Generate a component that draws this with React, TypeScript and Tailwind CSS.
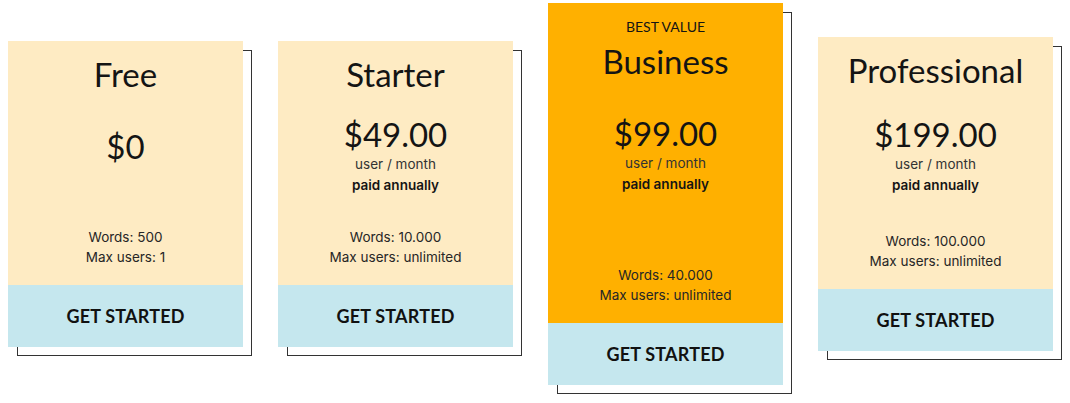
import React from "react";

type Plan = {
  name: string;
  price: string;
  billed: boolean;
  words: string;
  users: string;
  highlight?: boolean;
  height: string;
  priceGap: string;
};

const plans: Plan[] = [
  { name: "Free", price: "$0", billed: false, words: "500", users: "1", height: "h-[244px]", priceGap: "mt-[32px]" },
  { name: "Starter", price: "$49.00", billed: true, words: "10.000", users: "unlimited", height: "h-[244px]", priceGap: "mt-[20px]" },
  { name: "Business", price: "$99.00", billed: true, words: "40.000", users: "unlimited", highlight: true, height: "h-[320px]", priceGap: "mt-[32px]" },
  { name: "Professional", price: "$199.00", billed: true, words: "100.000", users: "unlimited", height: "h-[252px]", priceGap: "mt-[24px]" },
];

const small = { fontFamily: "Inter, 'Noto Sans', sans-serif" };

function PlanCard({ plan }: { plan: Plan }) {
  return (
    <div className="w-[235px] flex flex-col shadow-[9px_9px_0_-1px_#fff,9px_9px_0_0_#333] text-[#141414]">
      {/* top block */}
      <div
        className={`${plan.height} flex flex-col items-center ${plan.highlight ? "bg-[#ffb000] pt-[14px]" : "bg-[#feebc3] pt-[13px]"}`}
      >
        {plan.highlight && <div className="text-[14px] leading-[20px] mb-[4px]">BEST VALUE</div>}
        <div className="text-[33px] leading-[40px]">{plan.name}</div>
        <div className={`${plan.priceGap} text-[33px] leading-[40px]`}>{plan.price}</div>
        {plan.billed && (
          <div style={small} className="text-center text-[13.5px] leading-[21px]">
            <div className="text-[#333]">user / month</div>
            <div className="font-semibold">paid annually</div>
          </div>
        )}
        <div className="flex-1" />
        <div style={small} className="text-[13.5px] leading-[20px] text-[#262626] pb-[18px] text-center">
          <div>Words: {plan.words}</div>
          <div>Max users: {plan.users}</div>
        </div>
      </div>
      <button className="h-[62px] bg-[#c5e7ee] text-[18px] font-bold tracking-[0.2px] text-[#111]">
        GET STARTED
      </button>
    </div>
  );
}

export default function App() {
  return (
    <div
      className="w-[1070px] h-[403px] bg-white flex items-center gap-[35px] pl-[8px] pb-[15px]"
      style={{ fontFamily: "Lato, 'Noto Sans', sans-serif" }}
    >
      {plans.map((p) => (
        <PlanCard key={p.name} plan={p} />
      ))}
    </div>
  );
}
